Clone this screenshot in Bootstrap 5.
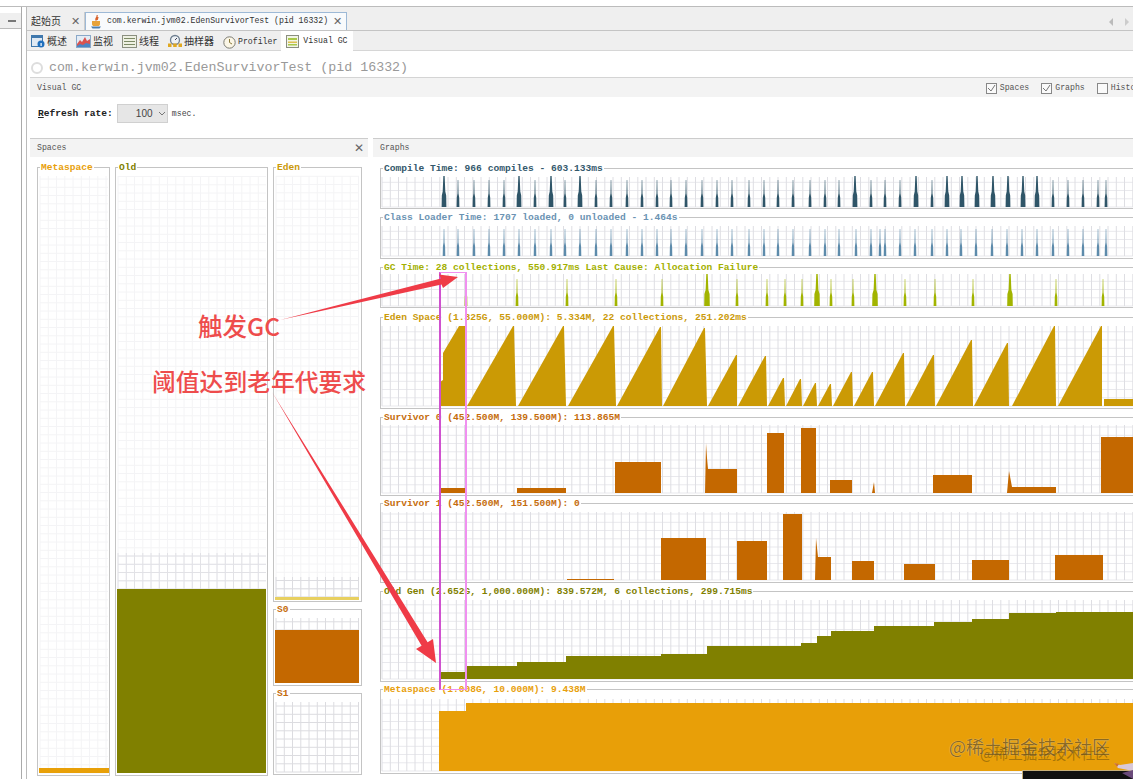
<!DOCTYPE html>
<html lang="en">
<head>
    <meta charset="UTF-8">
    <meta name="viewport" content="width=device-width, initial-scale=1.0">
    <title>Visual GC</title>
    <link href="https://cdn.jsdelivr.net/npm/bootstrap@5.3.3/dist/css/bootstrap.min.css" rel="stylesheet">
    <style>
        html, body { height: 779px; overflow: hidden; }
        body {
            position: relative;
            background: #fff;
            color: #333;
            font-family: "Liberation Mono", "Noto Sans CJK SC", monospace;
            font-size: 9.6px;
            line-height: 1;
        }
        svg { display: block; flex: none; }
        .cn { font-family: "Noto Sans CJK SC", "Noto Sans", sans-serif; }

        .app-top { height: 7px; border-bottom: 1px solid #bcbcbc; }
        .app-main { height: 772px; }
        .side-rail { width: 22px; border-right: 1px solid #aaa; margin-right: 4px; padding-top: 6px; }
        .side-head { height: 16px; background: #efefef; border-bottom: 1px solid #bbb; padding: 7px 3px 0 8px; }
        .side-head i { display: block; height: 1px; width: 8px; border-top: 2px solid #777; }
        .work { border-left: 1px solid #bbb; min-width: 0; }

        .tab-strip { height: 24px; background: #efefef; border-bottom: 1px solid #c4c4c4; padding-top: 6px; }
        .doc-tab { height: 18px; padding: 0 4px; font-size: 8.2px; color: #333; }
        .doc-first { width: 58px; font-size: 10px; border-right: 1px solid #ccc; }
        .doc-active { width: 262px; background: #f8fafc; border: 1px solid #9db9d6; border-bottom: 0; }
        .tab-x { font-size: 11px; color: #666; font-family: "Liberation Sans", sans-serif; }
        .strip-arrows { margin-left: auto; padding-right: 4px; gap: 10px; }
        .sub-strip { height: 20px; background: #efefef; border-bottom: 1px solid #d6d6d6; padding-left: 4px; }
        .sub-tab { height: 19px; gap: 2px; padding: 1px 9px 0 0; font-size: 10px; color: #333; white-space: nowrap; }
        .sub-tab.mono-tab { font-size: 8.2px; padding-top: 3px; }
        .sub-tab.sub-on { background: #fff; height: 20px; padding: 0 5px; margin-left: -5px; gap: 4px; align-self: flex-start; }

        .main-title { height: 26px; padding: 8px 0 0 4px; gap: 6px; font-size: 13.3px; color: #999; }
        .ring { width: 12px; height: 12px; border: 2px solid #ddd; border-radius: 50%; }
        .view-head { height: 20px; margin-left: 3px; background: #f3f3f3; border-top: 1px solid #d4d4d4; padding: 1px 0 0 7px; font-size: 8.2px; color: #555; }
        .chk-row { margin-left: auto; margin-right: -22px; gap: 12px; white-space: nowrap; }
        .chk-item { gap: 3px; }
        .chk { width: 11px; height: 11px; border: 1px solid #888; background: #fafafa; }
        .rate-row { height: 41px; padding: 7px 0 0 11px; gap: 4px; align-items: flex-start; }
        .rate-lbl { font-weight: 700; color: #222; padding-top: 5px; }
        .rate-lbl u { text-decoration: underline; }
        .rate-sel { width: 51px; height: 19px; background: #e6e6e6; border: 1px solid #d0d0d0; padding-left: 18px; gap: 5px; font-size: 10px; font-family: "Liberation Sans", sans-serif; color: #444; }
        .rate-unit { font-size: 8.2px; color: #444; padding-top: 6px; }

        .split { margin-left: 3px; gap: 5px; min-height: 0; }
        .pane-spaces { width: 338px; flex: none; }
        .pane-graphs { flex: 1; min-width: 0; }
        .pane-head { height: 19px; background: #f3f3f3; border-top: 1px solid #ccc; padding: 0 4px 0 7px; font-size: 8.2px; color: #555; }
        .pane-x { font-size: 12px; color: #666; font-family: "Liberation Sans", sans-serif; }

        fieldset.gbox { border: 1px solid #c4c4c4; padding: 0; margin: 0; min-width: 0; }
        fieldset.gbox legend { float: none; width: auto; margin: 0 0 0 2px; padding: 0 1px; font-size: 9.6px; line-height: 9px; height: 9px; font-weight: 700; white-space: nowrap; }
        fieldset.gbox.gap-8 { margin-top: 3px; }
        fieldset.gbox.gap-9 { margin-top: 4px; }
        fieldset.gbox.gap-10 { margin-top: 5px; }
        .spaces-cols { padding: 6px 0 0 7px; gap: 5px; }
        .sp-meta { width: 73px; }
        .sp-old { width: 153px; }
        .sp-new { width: 89px; gap: 3px; }
        .graphs-col { padding: 7px 0 0 7px; margin-right: -12px; }

        .c-compile { color: #33586c; }
        .c-class { color: #6b93b3; }
        .c-gc { color: #a3b000; }
        .c-eden { color: #cb9a0a; }
        .c-surv { color: #c56c0c; }
        .c-old { color: #808000; }
        .c-meta { color: #e89f0c; }

        .marker { position: absolute; left: 439px; top: 272px; width: 28px; height: 418px; border: 2px solid #f090f0; border-left-color: #cf52cf; border-top-width: 1px; border-bottom-width: 1px; }
        .over-arrows { position: absolute; left: 0; top: 0; }
        .note { position: absolute; font-family: "Noto Sans CJK SC", sans-serif; font-weight: 500; color: #ee4c4c; white-space: nowrap; line-height: 1; }
        .note-gc { left: 198px; top: 314px; font-size: 24.5px; }
        .note-age { left: 152px; top: 369px; font-size: 23.8px; }
        .wm { position: absolute; font-family: "Noto Sans CJK SC", sans-serif; white-space: nowrap; line-height: 1; }
        .wm-big { left: 949px; top: 737px; font-size: 18px; color: rgba(120, 85, 10, .85); text-shadow: 0 0 1px rgba(255,255,255,.7); }
        .wm-small { left: 980px; top: 746px; font-size: 14.5px; color: rgba(110, 80, 10, .55); }
        .corner-ad { position: absolute; left: 1022px; top: 770px; width: 111px; height: 9px; background: #111; border: 1px solid #c9b078; border-right: 0; border-bottom: 0; }
    </style>
</head>
<body>
    <div class="app-top"></div>
    <div class="app-main d-flex">
        <div class="side-rail flex-shrink-0">
            <div class="side-head"><i></i></div>
        </div>
        <div class="work flex-grow-1 d-flex flex-column">
            <div class="tab-strip d-flex align-items-end">
                <div class="doc-tab doc-first d-flex align-items-center justify-content-between cn">
                    <span>起始页</span><span class="tab-x">✕</span>
                </div>
                <div class="doc-tab doc-active d-flex align-items-center gap-1">
                    <svg width="13" height="14" viewBox="0 0 13 14">
                        <path d="M7 0c1 2-2 3-1 5 .5-1 2-2 2-3 0 1-1 2-.5 3" fill="none" stroke="#d9622b" stroke-width="1.2"/>
                        <path d="M2 6h8v3c0 1.500-1 2-2 2H4c-1 0-2-.5-2-2z" fill="#e8a33a"/>
                        <path d="M1 11.500h10l-1.500 2h-7z" fill="#4c7fb0"/>
                    </svg>
                    <span class="flex-grow-1">com.kerwin.jvm02.EdenSurvivorTest (pid 16332)</span>
                    <span class="tab-x">✕</span>
                </div>
                <div class="strip-arrows d-flex align-self-center">
                    <svg width="5" height="8" viewBox="0 0 5 8"><path d="M4 0v8L0 4z" fill="#bbb"/></svg>
                    <svg width="5" height="8" viewBox="0 0 5 8"><path d="M1 0v8l4-4z" fill="#ccc"/></svg>
                </div>
            </div>
            <div class="sub-strip d-flex">
                <div class="sub-tab d-flex align-items-center cn">
                    <svg width="14" height="13" viewBox="0 0 14 13">
                        <rect x=".5" y=".5" width="11" height="11" fill="#dfe9f3" stroke="#3f78ad"/>
                        <rect x="1" y="1" width="10" height="2" fill="#3f78ad"/>
                        <circle cx="10" cy="9" r="3.500" fill="#1f6fbd"/>
                        <rect x="9.500" y="8" width="1.200" height="3" fill="#fff"/>
                    </svg>
                    概述
                </div>
                <div class="sub-tab d-flex align-items-center cn">
                    <svg width="15" height="13" viewBox="0 0 15 13">
                        <rect x=".5" y=".5" width="14" height="12" fill="#e4ecf5" stroke="#8aa8c8"/>
                        <path d="M1 9l3-4 2 2 3-5 2 4 3-2v8H1z" fill="#d9534f"/>
                        <path d="M1 11l3-2 3 1 3-2 4 1v3H1z" fill="#4a86c5"/>
                    </svg>
                    监视
                </div>
                <div class="sub-tab d-flex align-items-center cn">
                    <svg width="15" height="13" viewBox="0 0 15 13">
                        <rect x=".5" y=".5" width="14" height="12" fill="#eef0e2" stroke="#8b8f80"/>
                        <path d="M2 3.500h11M2 6.500h11M2 9.500h11" stroke="#7d8a66"/>
                    </svg>
                    线程
                </div>
                <div class="sub-tab d-flex align-items-center cn">
                    <svg width="14" height="14" viewBox="0 0 14 14">
                        <circle cx="7" cy="6" r="4.500" fill="#eef2f6" stroke="#6f7f90" stroke-width="1.300"/>
                        <path d="M7 6l2-2" stroke="#445"/>
                        <rect x="0" y="9.500" width="3.500" height="3.500" fill="#e0a820"/>
                        <rect x="5.200" y="9.500" width="3.500" height="3.500" fill="#e0a820"/>
                        <rect x="10.500" y="9.500" width="3.500" height="3.500" fill="#e0a820"/>
                    </svg>
                    抽样器
                </div>
                <div class="sub-tab mono-tab d-flex align-items-center">
                    <svg width="13" height="13" viewBox="0 0 13 13">
                        <circle cx="6.500" cy="6.500" r="5.700" fill="#fbf6e6" stroke="#7b7b72"/>
                        <path d="M6.500 3v3.500l2.500 1.500" fill="none" stroke="#8a7a3c"/>
                    </svg>
                    Profiler
                </div>
                <div class="sub-tab mono-tab sub-on d-flex align-items-center">
                    <svg width="13" height="13" viewBox="0 0 13 13">
                        <rect x=".5" y=".5" width="12" height="12" fill="#f2f5e6" stroke="#8b8f80"/>
                        <rect x="2" y="3" width="9" height="2" fill="#a9c94a"/>
                        <rect x="2" y="6.500" width="9" height="1.500" fill="#e0c050"/>
                        <rect x="2" y="9" width="9" height="1.500" fill="#a9c94a"/>
                    </svg>
                    Visual GC
                </div>
            </div>
            <div class="main-title d-flex align-items-center">
                <span class="ring"></span>
                <span>com.kerwin.jvm02.EdenSurvivorTest (pid 16332)</span>
            </div>
            <div class="view-head d-flex align-items-center">
                <span>Visual GC</span>
                <div class="chk-row d-flex">
                    <div class="chk-item d-flex align-items-center">
                        <span class="chk"><svg width="9" height="9" viewBox="0 0 9 9"><path d="M1 4l3 3 4-6" fill="none" stroke="#777"/></svg></span>Spaces
                    </div>
                    <div class="chk-item d-flex align-items-center">
                        <span class="chk"><svg width="9" height="9" viewBox="0 0 9 9"><path d="M1 4l3 3 4-6" fill="none" stroke="#777"/></svg></span>Graphs
                    </div>
                    <div class="chk-item d-flex align-items-center">
                        <span class="chk"></span>Histogram
                    </div>
                </div>
            </div>
            <div class="rate-row d-flex">
                <span class="rate-lbl"><u>R</u>efresh rate:</span>
                <div class="rate-sel d-flex align-items-center">
                    <span>100</span>
                    <svg width="8" height="5" viewBox="0 0 8 5"><path d="M1 1l3 3 3-3" fill="none" stroke="#777"/></svg>
                </div>
                <span class="rate-unit">msec.</span>
            </div>
            <div class="split d-flex flex-grow-1">
                <div class="pane-spaces d-flex flex-column">
                    <div class="pane-head d-flex align-items-center justify-content-between"><span>Spaces</span><span class="pane-x">✕</span></div>
                    <div class="spaces-cols d-flex">
                        <fieldset class="gbox sp-meta c-meta">
                            <legend>Metaspace</legend>
                            <svg class="plot" data-key="spMeta" width="71" height="603" viewBox="38 172 71 603"></svg>
                        </fieldset>
                        <fieldset class="gbox sp-old c-old">
                            <legend>Old</legend>
                            <svg class="plot" data-key="spOld" width="151" height="603" viewBox="116 172 151 603"></svg>
                        </fieldset>
                        <div class="sp-new d-flex flex-column">
                            <fieldset class="gbox c-eden">
                                <legend>Eden</legend>
                                <svg class="plot" data-key="spEden" width="87" height="429" viewBox="274 172 87 429"></svg>
                            </fieldset>
                            <fieldset class="gbox c-surv">
                                <legend>S0</legend>
                                <svg class="plot" data-key="spS0" width="87" height="71" viewBox="274 614 87 71"></svg>
                            </fieldset>
                            <fieldset class="gbox c-surv">
                                <legend>S1</legend>
                                <svg class="plot" data-key="spS1" width="87" height="76" viewBox="274 698 87 76"></svg>
                            </fieldset>
                        </div>
                    </div>
                </div>
                <div class="pane-graphs d-flex flex-column">
                    <div class="pane-head d-flex align-items-center"><span>Graphs</span></div>
                    <div class="graphs-col d-flex flex-column">
                        <fieldset class="gbox c-compile">
                            <legend>Compile Time: 966 compiles - 603.133ms</legend>
                            <svg class="plot" data-key="compile" width="760" height="35" viewBox="381 173 760 35"></svg>
                        </fieldset>
                        <fieldset class="gbox c-class gap-9">
                            <legend>Class Loader Time: 1707 loaded, 0 unloaded - 1.464s</legend>
                            <svg class="plot" data-key="classes" width="760" height="36" viewBox="381 222 760 36"></svg>
                        </fieldset>
                        <fieldset class="gbox c-gc gap-9">
                            <legend>GC Time: 28 collections, 550.917ms Last Cause: Allocation Failure</legend>
                            <svg class="plot" data-key="gc" width="760" height="35" viewBox="381 272 760 35"></svg>
                        </fieldset>
                        <fieldset class="gbox c-eden gap-10">
                            <legend>Eden Space (1.325G, 55.000M): 5.334M, 22 collections, 251.202ms</legend>
                            <svg class="plot" data-key="eden" width="760" height="86" viewBox="381 322 760 86"></svg>
                        </fieldset>
                        <fieldset class="gbox c-surv gap-9">
                            <legend>Survivor 0 (452.500M, 139.500M): 113.865M</legend>
                            <svg class="plot" data-key="s0" width="760" height="73" viewBox="381 422 760 73"></svg>
                        </fieldset>
                        <fieldset class="gbox c-surv gap-8">
                            <legend>Survivor 1 (452.500M, 151.500M): 0</legend>
                            <svg class="plot" data-key="s1" width="760" height="74" viewBox="381 508 760 74"></svg>
                        </fieldset>
                        <fieldset class="gbox c-old gap-9">
                            <legend>Old Gen (2.652G, 1,000.000M): 839.572M, 6 collections, 299.715ms</legend>
                            <svg class="plot" data-key="old" width="760" height="85" viewBox="381 596 760 85"></svg>
                        </fieldset>
                        <fieldset class="gbox c-meta gap-8">
                            <legend>Metaspace (1.008G, 10.000M): 9.438M</legend>
                            <svg class="plot" data-key="meta" width="760" height="79" viewBox="381 694 760 79"></svg>
                        </fieldset>
                    </div>
                </div>
            </div>
        </div>
    </div>

    <!-- annotations drawn on top of the screenshot -->
    <div class="marker"></div>
    <div class="corner-ad"></div>
    <svg class="over-arrows" width="1133" height="779" viewBox="0 0 1133 779">
        <path d="M280 320L441 278.500L439 274.500L458 277L443 288L441.500 284.500z" fill="#ef3b47"/>
        <path d="M272 392L427.600 642.200L433 639L436 663L416 649L421.600 645.800z" fill="#ef3b47"/>
        <path d="M1133 771L1118 768L1114 763L1120 765L1133 763z" fill="#d8c8d8"/>
        <path d="M1114 763L1119 764L1117 767z" fill="#d0702a"/>
        <path d="M1133 779L1122 773L1133 770z" fill="#6a4a7a"/>
    </svg>
    <div class="note note-gc">触发GC</div>
    <div class="note note-age">阈值达到老年代要求</div>
    <div class="wm wm-big">@稀土掘金技术社区</div>
    <div class="wm wm-small">@稀土掘金技术社区</div>

    <script src="https://cdn.jsdelivr.net/npm/bootstrap@5.3.3/dist/js/bootstrap.bundle.min.js"></script>
    <script>
        // all coordinates below are page pixels, each svg viewBox is in page space
        const compileTall = [444, 519, 551, 580, 855, 916, 947, 962, 977, 993, 1008, 1023, 1037];
        const compileX = [444, 458, 474, 489, 504, 519, 535, 551, 565, 580, 596, 611, 627, 642, 657, 671, 686, 702, 717, 732, 749, 764, 778, 793, 810, 825, 839, 855, 871, 885, 900, 916, 932, 947, 962, 977, 993, 1008, 1023, 1037, 1053, 1068, 1083, 1098, 1106];
        const classX = [444, 458, 474, 489, 504, 519, 535, 551, 565, 580, 596, 611, 627, 642, 657, 671, 686, 702, 717, 732, 749, 764, 778, 793, 810, 825, 839, 856, 871, 880, 885, 900, 915, 932, 947, 961, 976, 992, 1007, 1022, 1037, 1053, 1068, 1083, 1098, 1106];
        const gcX = [466, 517, 567, 616, 662, 707, 737, 767, 785, 802, 817, 831, 853, 875, 905, 935, 973, 1010, 1056, 1103];
        const gcTall = [707, 817, 875, 1010];

        // [start, peak x, peak y, drop x]
        const edenTeeth = [
            [467, 513, 326, 516], [518, 563, 326, 566], [568, 613, 326, 616], [617, 660, 327, 662],
            [663, 704, 328, 707], [708, 736, 355, 737], [738, 765, 356, 767], [768, 783, 378, 785],
            [786, 800, 379, 802], [803, 815, 383, 817], [818, 830, 384, 832], [833, 851, 372, 853],
            [854, 872, 372, 874], [875, 903, 353, 905], [906, 933, 355, 935], [936, 971, 340, 973],
            [974, 1007, 343, 1009], [1012, 1054, 326, 1056], [1058, 1101, 326, 1102]
        ];
        // [x1, x2, top y]
        const s0Blocks = [[440, 466, 488], [517, 566, 488], [615, 661, 462], [767, 784, 433], [801, 816, 428], [830, 852, 480], [933, 972, 475], [1101, 1140, 437]];
        const s1Blocks = [[567, 614, 579], [661, 706, 538], [737, 767, 541], [783, 802, 514], [852, 874, 561], [904, 935, 564], [972, 1009, 560], [1055, 1103, 555]];
        const oldSteps = [[439, 466, 672], [466, 517, 666], [517, 566, 662], [566, 661, 656], [661, 707, 654], [707, 801, 646], [801, 817, 643], [817, 831, 636], [831, 874, 631], [874, 934, 626], [934, 972, 622], [972, 1009, 619], [1009, 1056, 613], [1056, 1140, 612]];

        function grid(x1, x2, y1, y2, color, lines = color, step = 8.25) {
            let v = '', h = '';
            for (let x = x1; x <= x2; x += step) v += `M${x.toFixed(1)} ${y1}V${y2}`;
            for (let y = y2; y >= y1; y -= step) h += `M${x1} ${y.toFixed(1)}H${x2}`;
            return `<path d="${h}" stroke="${lines}" fill="none"/><path d="${v}" stroke="${color}" fill="none"/>`;
        }
        function poly(points, color) {
            return `<polygon points="${points.map(p => p.join(',')).join(' ')}" fill="${color}"/>`;
        }
        function rect(x1, x2, y1, y2, color) {
            return poly([[x1, y1], [x2, y1], [x2, y2], [x1, y2]], color);
        }
        // stepped spike: narrow needle on top of a wider foot
        function spike(x, top, bottom, w, tip, color) {
            const mid = top + (bottom - top) * 0.5;
            return poly([[x - tip * 0.5, top], [x + tip * 0.5, top], [x + tip, mid], [x + w, mid + 4], [x + w + 0.2, bottom], [x - w - 0.2, bottom], [x - w, mid + 4], [x - tip, mid]], color);
        }

        const gridColor = '#dedee3';
        const gridSoft = '#e9e9ed';
        const fade = '#f4f4f6';
        const plots = {
            compile: grid(382, 1140, 177, 207, gridColor, gridSoft) + compileX.map(x => {
                const tall = compileTall.includes(x);
                return spike(x, tall ? 176 : 180, 207, tall ? 2.2 : 1.2, tall ? 1.3 : 0.5, '#2f5568');
            }).join(''),
            classes: grid(382, 1140, 226, 256, gridColor, gridSoft) + classX.map(x => spike(x, 229, 256, 1.1, 0.5, '#5d8bab')).join(''),
            gc: grid(382, 1140, 274, 306, gridColor, gridSoft) + gcX.map(x => {
                const tall = gcTall.includes(x);
                return spike(x, tall ? 274 : 279, 306, tall ? 2.6 : 1.2, tall ? 1.4 : 0.5, '#a2b400');
            }).join(''),
            eden: grid(382, 1140, 326, 406, gridColor, gridSoft)
                + poly([[440, 406], [440, 382], [443, 380], [443, 353], [459, 326], [466, 326], [466, 406]], '#cb9a05')
                + edenTeeth.map(t => poly([[t[0], 406], [t[1], t[2]], [t[1] + 1, t[2]], [t[3], 406]], '#cb9a05')).join('')
                + rect(1104, 1140, 399, 406, '#cb9a05'),
            s0: grid(382, 1140, 425, 493, gridColor, gridSoft)
                + s0Blocks.map(b => rect(b[0], b[1], b[2], 493, '#c46800')).join('')
                + poly([[705, 493], [706, 443], [707, 458], [708, 469], [737, 469], [737, 493]], '#c46800')
                + poly([[872, 493], [874, 482], [875, 493]], '#c46800')
                + poly([[1007, 493], [1009, 471], [1012, 487], [1056, 487], [1056, 493]], '#c46800'),
            s1: grid(382, 1140, 512, 580, gridColor, gridSoft)
                + s1Blocks.map(b => rect(b[0], b[1], b[2], 580, '#c46800')).join('')
                + poly([[815, 580], [816, 538], [818, 557], [831, 557], [831, 580]], '#c46800'),
            old: grid(382, 1140, 600, 679, gridColor, gridSoft)
                + oldSteps.map(s => rect(s[0], s[1], s[2], 679, '#808000')).join(''),
            meta: grid(382, 1140, 699, 771, gridColor, gridSoft)
                + rect(439, 466, 711, 771, '#e89f08') + rect(466, 1140, 703, 771, '#e89f08'),
            spMeta: grid(40, 108, 176, 773, fade) + rect(39, 109, 768, 773, '#e8a008'),
            spOld: grid(118, 266, 176, 589, fade) + grid(118, 266, 553, 589, '#e2e2e6') + rect(117, 266, 589, 773, '#808000'),
            spEden: grid(276, 359, 176, 597, fade) + grid(276, 359, 577, 597, '#dcdce0') + rect(275, 359, 597, 600, '#e8d060'),
            spS0: grid(276, 359, 618, 630, '#dcdce0') + rect(275, 359, 630, 683, '#c46800'),
            spS1: grid(276, 359, 702, 772, '#dcdce0')
        };
        document.querySelectorAll('.plot').forEach(el => {
            el.innerHTML = plots[el.dataset.key];
        });
    </script>
</body>
</html>
